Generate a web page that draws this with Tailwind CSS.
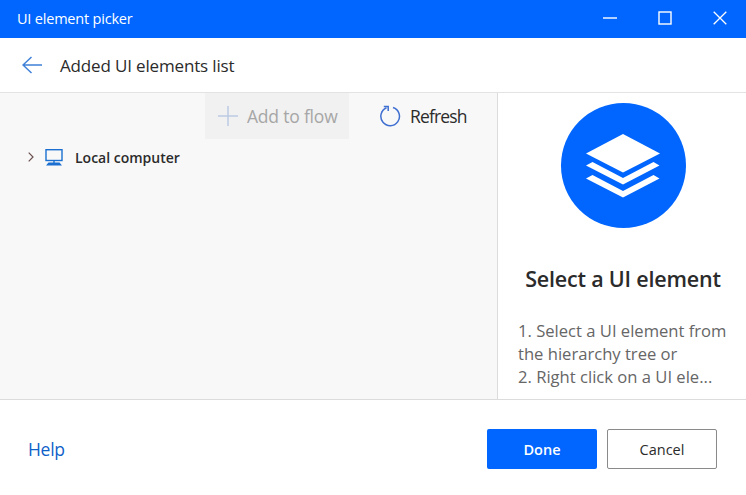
<!DOCTYPE html>
<html lang="en">
<head>
  <meta charset="UTF-8" />
  <title>UI element picker</title>
  <script src="https://cdn.jsdelivr.net/npm/@tailwindcss/browser@4"></script>
</head>
<body class="w-[746px] h-[495px] overflow-hidden bg-white font-['Open_Sans',sans-serif] text-[#2b2b2b]">

  <!-- Title bar -->
  <header class="h-[38px] bg-[#0066ff] text-white flex items-center justify-between pl-[17px]">
    <h1 class="text-[14.5px] tracking-[-0.2px]">UI element picker</h1>
    <div class="flex items-center h-full pb-[2px]">
      <button class="w-[52px] h-full flex items-center justify-center">
        <svg width="14" height="14" viewBox="0 0 14 14"><path d="M0 7h14" stroke="#fff" stroke-width="1.4"/></svg>
      </button>
      <button class="w-[58px] h-full flex items-center justify-center">
        <svg width="14" height="14" viewBox="0 0 14 14" fill="none"><rect x="1" y="1" width="12" height="12" stroke="#fff" stroke-width="1.4"/></svg>
      </button>
      <button class="w-[52px] h-full flex items-center justify-center">
        <svg width="14" height="14" viewBox="0 0 14 14"><path d="M.7.7l12.6 12.6M13.3.7L.7 13.3" stroke="#fff" stroke-width="1.3"/></svg>
      </button>
    </div>
  </header>

  <!-- Sub header -->
  <div class="h-[55px] border-b border-[#e3e3e3] flex items-center pl-[22px] gap-[18px]">
    <svg width="20" height="18" viewBox="0 0 20 18" fill="none"><path d="M20 9H1M9.5 1L1 9l8.500 8" stroke="#3f80d8" stroke-width="1.5"/></svg>
    <span class="text-[17px] tracking-[-0.16px] pt-[1px]">Added UI elements list</span>
  </div>

  <!-- Body -->
  <div class="h-[306px] flex">
    <section class="w-[498px] bg-[#f8f8f8] border-r border-[#dcdcdc]">
      <div class="h-[46px] flex justify-end">
        <div class="w-[144px] h-full bg-[#f1f1f1] flex items-center pl-[13px] gap-[9px] text-[#a6a6a6]">
          <svg width="20" height="20" viewBox="0 0 20 20"><path d="M10 0v20M0 10h20" stroke="#bccbe3" stroke-width="1.5"/></svg>
          <span class="text-[17.5px] tracking-[-0.2px]">Add to flow</span>
        </div>
        <div class="w-[148px] h-full flex items-center pl-[30px] gap-[9px]">
          <svg width="22" height="22" viewBox="0 0 22 22" fill="none">
            <path d="M7.500 2.800A9.300 9.300 0 1 0 14 2.500" stroke="#3f6fd1" stroke-width="1.500"/>
            <path d="M4.800 1.500h4.400v4.400" stroke="#3f6fd1" stroke-width="1.500"/>
          </svg>
          <span class="text-[17.5px] tracking-[-0.85px]">Refresh</span>
        </div>
      </div>
      <div class="flex items-center pl-[28px] mt-[8px] h-[20px]">
        <svg width="6" height="10" viewBox="0 0 6 10" fill="none"><path d="M.7.7L5 5 .7 9.300" stroke="#6b4f4f" stroke-width="1.200"/></svg>
        <svg class="ml-[11px]" width="18" height="17" viewBox="0 0 18 17" fill="none">
          <rect x="1" y=".700" width="16" height="10.800" stroke="#1a6fd0" stroke-width="1.400"/>
          <path d="M9 11.500v3" stroke="#1a6fd0" stroke-width="1.400"/>
          <path d="M3.500 13.500h11L17 16.500H1z" fill="#1a6fd0"/>
        </svg>
        <span class="ml-[12px] text-[14px] font-semibold tracking-[0px]">Local computer</span>
      </div>
    </section>

    <aside class="flex-1 min-w-0 flex flex-col items-center pt-[10px] pl-[2px]">
      <div class="w-[125px] h-[125px] rounded-full bg-[#0066ff] flex items-center justify-center">
        <svg width="74" height="64" viewBox="0 0 74 64" fill="#fff">
          <path d="M37 0l37 19.500-37 19L0 19.500z"/>
          <path d="M6.500 28l30.500 16 30.500-16 6 3.500L37 50.500 0 31.500z"/>
          <path d="M6.500 41l30.500 16 30.500-16 6 3.500L37 63.500 0 44.500z"/>
        </svg>
      </div>
      <h2 class="mt-[36px] text-[21.500px] leading-[30px] font-semibold tracking-[-0.2px] text-center whitespace-nowrap">Select a UI element</h2>
      <p class="self-start ml-[18px] mt-[25px] text-[16.600px] leading-[23px] text-[#666666] whitespace-nowrap">1. Select a UI element from<br />the hierarchy tree or<br />2. Right click on a UI ele...</p>
    </aside>
  </div>

  <!-- Footer -->
  <footer class="h-[96px] border-t border-[#dcdcdc] flex items-center justify-between pl-[28px] pr-[29px] pt-[3px]">
    <a href="#" class="text-[17.500px] tracking-[-0.3px] text-[#0f5fc9]">Help</a>
    <div class="flex gap-[10px]">
      <button class="w-[110px] h-[40px] pt-[1px] rounded-[2px] bg-[#0066ff] text-white text-[14.500px] font-semibold">Done</button>
      <button class="w-[110px] h-[40px] pt-[1px] rounded-[2px] bg-white border border-[#8a8a8a] text-[14.500px]">Cancel</button>
    </div>
  </footer>

</body>
</html>
